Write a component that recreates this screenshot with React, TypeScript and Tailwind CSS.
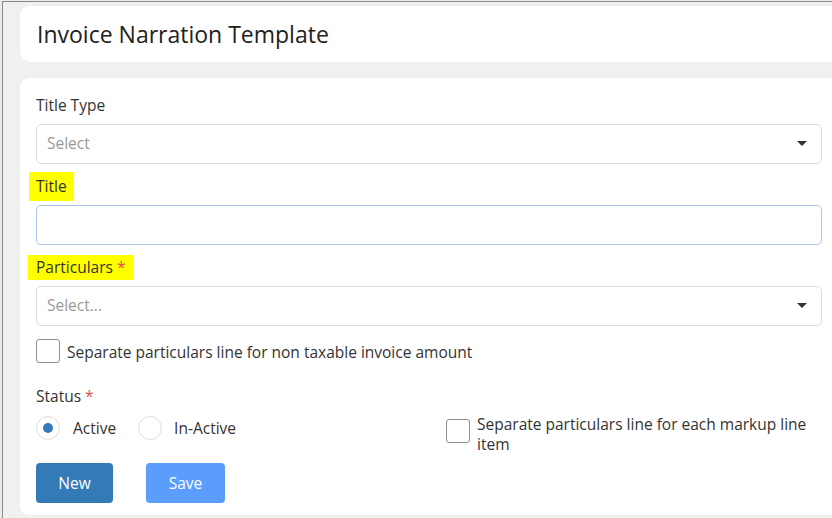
import React from "react";

const font = { fontFamily: '"Open Sans", "Noto Sans", sans-serif' };

function Caret() {
  return (
    <svg width="10" height="6" viewBox="0 0 10 6" className="block">
      <path d="M0 0 L10 0 L5 5 Z" fill="#333" />
    </svg>
  );
}

function SelectBox({ placeholder }: { placeholder: string }) {
  return (
    <div className="flex h-[40px] items-center justify-between rounded-[5px] border border-[#dcdcdc] bg-white pl-[10px] pr-[14px]">
      <span className="text-[15.5px] text-[#999]">{placeholder}</span>
      <Caret />
    </div>
  );
}

function Checkbox() {
  return <div className="h-[24px] w-[24px] shrink-0 rounded-[3px] border border-[#8f8f8f] bg-white" />;
}

export default function App() {
  return (
    <div className="h-[518px] w-[832px] overflow-hidden bg-[#ececec] pl-[2px] pt-[1px]" style={font}>
      <div className="h-full border-l border-t border-[#8a8a8a] bg-[#f0f0f0] pl-[17px] pt-[4px]">
        <div className="-mr-[20px] flex h-[56px] items-center rounded-[9px] bg-white pl-[17px] shadow-[0_0_1px_rgba(0,0,0,0.08)]">
          <h1 className="text-[23px] text-[#222]">Invoice Narration Template</h1>
        </div>
        <div className="-mr-[20px] mt-[16px] h-[437px] rounded-[9px] bg-white pl-[16px] pr-[30px] pt-[16px] text-[#333]">
          <div className="flex h-[30px] items-start text-[15.5px]">Title Type</div>
          <SelectBox placeholder="Select" />
          <div className="flex h-[41px] items-center">
            <span className="-ml-[7px] mt-[4px] bg-[#ffff00] px-[7px] py-[4px] text-[15.5px] leading-[21px]">Title</span>
          </div>
          <div className="h-[40px] rounded-[5px] border border-[#a9c6e6] bg-white" />
          <div className="flex h-[41px] items-center">
            <span className="-ml-[8px] mt-[4px] bg-[#ffff00] px-[8px] py-[2px] text-[15.5px] leading-[21px]">
              Particulars <span className="text-[#d9534f]">*</span>
            </span>
          </div>
          <SelectBox placeholder="Select..." />
          <div className="mt-[11px] flex items-center gap-[7px]">
            <Checkbox />
            <span className="pt-[4px] text-[15.5px]">Separate particulars line for non taxable invoice amount</span>
          </div>
          <div className="mt-[21px] text-[15.5px] leading-[22px]">
            Status <span className="text-[#d9534f]">*</span>
          </div>
          <div className="mt-[6px] flex">
            <div className="flex w-[410px] items-start pt-[2px]">
              <div className="flex items-center">
                <div className="flex h-[24px] w-[24px] items-center justify-center rounded-full border border-[#ddd]">
                  <div className="h-[10px] w-[10px] rounded-full bg-[#337ab7]" />
                </div>
                <span className="ml-[13px] pt-[2px] text-[15.5px]">Active</span>
              </div>
              <div className="ml-[22px] flex items-center">
                <div className="h-[24px] w-[24px] rounded-full border border-[#ddd]" />
                <span className="ml-[12px] pt-[2px] text-[15.5px]">In-Active</span>
              </div>
            </div>
            <div className="flex flex-1 items-start gap-[7px]">
              <div className="mt-[6px]">
                <Checkbox />
              </div>
              <span className="pt-[1px] text-[15.5px] leading-[20px]">Separate particulars line for each markup line item</span>
            </div>
          </div>
          <div className="mt-[9px] flex gap-[33px]">
            <button className="h-[40px] w-[77px] rounded-[4px] bg-[#337ab7] text-[15.5px] text-white">New</button>
            <button className="h-[40px] w-[79px] rounded-[4px] bg-[#5b9dfd] text-[15.5px] text-white">Save</button>
          </div>
        </div>
      </div>
    </div>
  );
}
